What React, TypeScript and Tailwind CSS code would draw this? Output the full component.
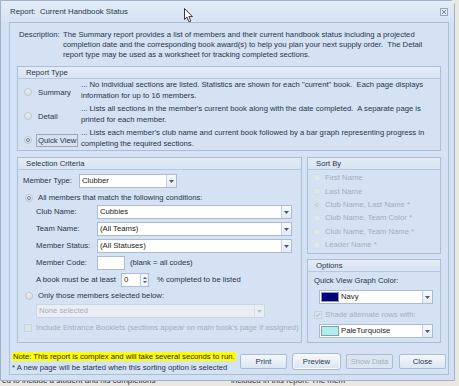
import React from 'react';

const font = { fontFamily: '"Liberation Sans", Arial, sans-serif' };

const Radio = ({ checked, disabled }: { checked?: boolean; disabled?: boolean }) => (
    <span
        className={`flex h-[8px] w-[8px] shrink-0 items-center justify-center rounded-full border ${
            disabled ? 'border-[#d3dce7] bg-[#dfe6ef]' : 'border-[#b9c4d1] bg-gradient-to-b from-[#eef1f5] to-[#d5dce5]'
        }`}
    >
        {checked && (
            <span className={`h-[4px] w-[4px] rounded-full border ${disabled ? 'border-[#b9c4d1] bg-[#e8edf3]' : 'border-[#6f7d8e] bg-[#eef1f5]'}`} />
        )}
    </span>
);

const Check = ({ checked, disabled }: { checked?: boolean; disabled?: boolean }) => (
    <span className={`flex h-[8px] w-[8px] shrink-0 items-center justify-center border ${disabled ? 'border-[#c7d2de] bg-[#dce4ee]' : 'border-[#9fb0c4] bg-white'}`}>
        {checked && (
            <svg width="6" height="6" viewBox="0 0 6 6">
                <path d="M0.8 3 L2.4 4.6 L5.2 1.2" fill="none" stroke="#b9c3cf" strokeWidth="1.1" />
            </svg>
        )}
    </span>
);

const Arrow = ({ disabled }: { disabled?: boolean }) => (
    <span className={`flex w-[10px] shrink-0 items-center justify-center border-l ${disabled ? 'border-[#d7dfe8] bg-[#e9eef4]' : 'border-[#c0cedf] bg-gradient-to-b from-[#f7f9fc] to-[#e4ebf3]'}`}>
        <svg width="5" height="3" viewBox="0 0 5 3">
            <path d="M0 0 H5 L2.5 3 Z" fill={disabled ? '#b8c2ce' : '#4b5a6c'} />
        </svg>
    </span>
);

const Combo = ({ className, text, swatch, disabled }: { className: string; text: string; swatch?: string; disabled?: boolean }) => (
    <div className={`flex border ${disabled ? 'border-[#ccd6e2] bg-[#e9eef4] text-[#a5afbb]' : 'border-[#a9bcd3] bg-white text-[#1b1b1b]'} ${className}`}>
        {swatch && <span className={`my-[1px] ml-[1px] w-[18px] border border-[#8f9aa6] ${swatch}`} />}
        <span className="flex flex-1 items-center pl-[2px] leading-none">{text}</span>
        <Arrow disabled={disabled} />
    </div>
);

const GroupHeader = ({ title }: { title: string }) => (
    <div className="flex h-[12px] items-center border-b border-[#b4c7de] bg-gradient-to-b from-[#e3ecf7] to-[#d8e4f3] pl-[8px]">{title}</div>
);

const Button = ({ label, focused, disabled }: { label: string; focused?: boolean; disabled?: boolean }) => (
    <div
        className={`flex h-[15px] w-[47px] items-center justify-center rounded-[2px] border ${
            focused ? 'border-[#f7fbff] outline outline-1 outline-[#a6bbd3]' : 'border-[#a9bcd3]'
        } ${disabled ? 'bg-[#dbe5f1] text-[#a3afbd]' : 'bg-gradient-to-b from-[#f5f8fc] to-[#dbe6f3]'}`}
    >
        {label}
    </div>
);

const sortOptions = ['First Name', 'Last Name', 'Club Name, Last Name *', 'Club Name, Team Color *', 'Club Name, Team Name *', 'Leader Name *'];

const App: React.FC = () => {
    return (
        <div className="relative h-[386px] w-[459px] overflow-hidden bg-[#ebe8e2] text-[7.7px] text-[#26364a]" style={font}>
            <div className="flex h-[381px] w-[455px] flex-col rounded-tr-[5px] border border-[#9db3cc] bg-[#d2e0f1]">
                {/* title bar */}
                <div className="flex h-[21px] shrink-0 items-center justify-between bg-gradient-to-b from-[#e4edf8] to-[#d6e3f3] pl-[9px] pr-[6px]">
                    <span className="text-[7.8px]">Report:&nbsp; Current Handbook Status</span>
                    <svg width="8" height="8" viewBox="0 0 8 8">
                        <rect x="0.5" y="0.5" width="7" height="7" fill="none" stroke="#9aa8b8" />
                        <path d="M2 2 L6 6 M6 2 L2 6" stroke="#7b8899" strokeWidth="1" />
                    </svg>
                </div>

                {/* client area */}
                <div className="mb-[5px] ml-[8px] mr-[5px] flex flex-1 flex-col border border-[#a9bfd8] bg-[#d4e2f3] pl-[7px] pr-[4px] pt-[7px]">
                    <div className="flex leading-[10px]">
                        <span className="w-[46px] shrink-0 pl-[2px]">Description:</span>
                        <div className="whitespace-nowrap">
                            <div>The Summary report provides a list of members and their current handbook status including a projected</div>
                            <div>completion date and the corresponding book award(s) to help you plan your next supply order.&nbsp; The Detail</div>
                            <div>report type may be used as a worksheet for tracking completed sections.</div>
                        </div>
                    </div>

                    {/* report type */}
                    <div className="mt-[6px] h-[85px] w-[424px] border border-[#a9bfd8]">
                        <GroupHeader title="Report Type" />
                        <div className="flex flex-col gap-[3px] pt-[1px] leading-[10.5px]">
                            {[
                                ['Summary', '... No individual sections are listed. Statistics are shown for each "current" book.  Each page displays', 'information for up to 16 members.'],
                                ['Detail', "... Lists all sections in the member's current book along with the date completed.  A separate page is", 'printed for each member.'],
                                ['Quick View', "... Lists each member's club name and current book followed by a bar graph representing progress in", 'completing the required sections.'],
                            ].map(([label, l1, l2], i) => (
                                <div key={label} className="flex">
                                    <div className="flex w-[63px] shrink-0 items-center gap-[4px] pl-[6px] pt-[3px]">
                                        <Radio checked={i === 2} />
                                        <span className={`px-[1px] leading-[11px] ${i === 2 ? 'border border-[#9aa7b5]' : 'border border-transparent'}`}>{label}</span>
                                    </div>
                                    <div className="whitespace-pre">
                                        <div>{l1}</div>
                                        <div>{l2}</div>
                                    </div>
                                </div>
                            ))}
                        </div>
                    </div>

                    {/* criteria + sort/options */}
                    <div className="mt-[6px] flex w-[424px] gap-[5px]">
                        <div className="h-[186px] w-[285px] border border-[#a9bfd8]">
                            <GroupHeader title="Selection Criteria" />
                            <div className="flex flex-col pl-[5px] pt-[4px]">
                                <div className="flex h-[14px] items-center">
                                    <span className="w-[56px]">Member Type:</span>
                                    <Combo className="h-[14px] w-[98px]" text="Clubber" />
                                </div>
                                <div className="mt-[5px] flex h-[10px] items-center gap-[5px] pl-[2px]">
                                    <Radio checked />
                                    <span>All members that match the following conditions:</span>
                                </div>
                                <div className="mt-[2px] flex flex-col gap-[3px] pl-[13px]">
                                    {[
                                        ['Club Name:', 'Cubbies'],
                                        ['Team Name:', '(All Teams)'],
                                        ['Member Status:', '(All Statuses)'],
                                    ].map(([l, v]) => (
                                        <div key={l} className="flex h-[14px] items-center">
                                            <span className="w-[61px]">{l}</span>
                                            <Combo className="h-[14px] w-[195px]" text={v} />
                                        </div>
                                    ))}
                                    <div className="flex h-[14px] items-center">
                                        <span className="w-[61px]">Member Code:</span>
                                        <span className="h-[14px] w-[28px] border border-[#a9bcd3] bg-white" />
                                        <span className="pl-[5px]">(blank = all codes)</span>
                                    </div>
                                    <div className="flex h-[14px] items-center">
                                        <span className="w-[85px]">A book must be at least</span>
                                        <div className="flex h-[14px] w-[28px] border border-[#a9bcd3] bg-white">
                                            <span className="flex flex-1 items-center pl-[2px] text-[#1b1b1b]">0</span>
                                            <span className="flex w-[8px] flex-col items-center justify-center gap-[2px] border-l border-[#c0cedf] bg-[#eef3f8]">
                                                <svg width="4" height="2" viewBox="0 0 4 2"><path d="M0 2 H4 L2 0 Z" fill="#4b5a6c" /></svg>
                                                <svg width="4" height="2" viewBox="0 0 4 2"><path d="M0 0 H4 L2 2 Z" fill="#4b5a6c" /></svg>
                                            </span>
                                        </div>
                                        <span className="pl-[8px]">% completed to be listed</span>
                                    </div>
                                </div>
                                <div className="mt-[4px] flex h-[10px] items-center gap-[5px] pl-[2px]">
                                    <Radio />
                                    <span>Only those members selected below:</span>
                                </div>
                                <div className="mt-[3px] pl-[13px]">
                                    <Combo className="h-[14px] w-[229px]" text="None selected" disabled />
                                </div>
                                <div className="mt-[5px] flex h-[10px] items-center gap-[4px] pl-[1px] text-[#a5afbb]">
                                    <Check disabled />
                                    <span className="whitespace-nowrap">Include Entrance Booklets (sections appear on main book's page if assigned)</span>
                                </div>
                            </div>
                        </div>

                        <div className="flex w-[134px] flex-col gap-[5px]">
                            <div className="h-[97px] border border-[#a9bfd8]">
                                <GroupHeader title="Sort By" />
                                <div className="flex flex-col gap-[3.4px] pl-[5px] pt-[3px] text-[#a3aebb]">
                                    {sortOptions.map((o, i) => (
                                        <div key={o} className="flex h-[10px] items-center gap-[4px]">
                                            <Radio disabled checked={i === 2} />
                                            <span>{o}</span>
                                        </div>
                                    ))}
                                </div>
                            </div>
                            <div className="h-[84px] border border-[#a9bfd8]">
                                <GroupHeader title="Options" />
                                <div className="flex flex-col pl-[6px] pt-[4px]">
                                    <span className="leading-[10px]">Quick View Graph Color:</span>
                                    <Combo className="ml-[5px] mt-[4px] h-[14px] w-[114px]" text="Navy" swatch="bg-[#000080]" />
                                    <div className="mt-[6px] flex h-[10px] items-center gap-[3px] text-[#a5afbb]">
                                        <Check checked disabled />
                                        <span>Shade alternate rows with:</span>
                                    </div>
                                    <Combo className="ml-[5px] mt-[4px] h-[14px] w-[114px]" text="PaleTurquoise" swatch="bg-[#afeeee]" />
                                </div>
                            </div>
                        </div>
                    </div>

                    {/* footer */}
                    <div className="mt-[8px] flex items-start justify-between">
                        <div className="-ml-[5px] leading-[11px]">
                            <div><span className="bg-[#ffff00] px-[1px] text-[#1b1b1b]">Note: This report is complex and will take several seconds to run.</span></div>
                            <div>* A new page will be started when this sorting option is selected</div>
                        </div>
                        <div className="-mr-[2px] mt-[3px] flex gap-[6px]">
                            <Button label="Print" />
                            <Button label="Preview" focused />
                            <Button label="Show Data" disabled />
                            <Button label="Close" />
                        </div>
                    </div>
                </div>
            </div>

            {/* app behind the dialog */}
            <div className="h-[5px] overflow-hidden whitespace-nowrap pl-[2px] text-[8px] leading-[8px] text-[#2b2b2b]">
                <div className="-mt-[4px]">ed to include a student and his completions&nbsp;&nbsp;&nbsp;&nbsp;&nbsp;&nbsp;&nbsp;&nbsp;&nbsp;&nbsp;&nbsp;&nbsp;&nbsp;&nbsp;&nbsp;&nbsp;&nbsp;&nbsp;&nbsp;&nbsp;&nbsp;&nbsp;&nbsp;&nbsp;&nbsp;&nbsp;&nbsp;&nbsp;&nbsp;&nbsp;&nbsp;&nbsp;&nbsp; included in this report. The mem</div>
            </div>

            {/* mouse pointer */}
            <svg className="absolute left-[184px] top-[8px]" width="10" height="15" viewBox="0 0 10 15">
                <path d="M0.5 0.5 L0.5 11.5 L3 9.2 L5 13.8 L6.8 13 L4.9 8.6 L8.4 8.6 Z" fill="#fff" stroke="#222" strokeWidth="0.9" />
            </svg>
        </div>
    );
};

export default App;
